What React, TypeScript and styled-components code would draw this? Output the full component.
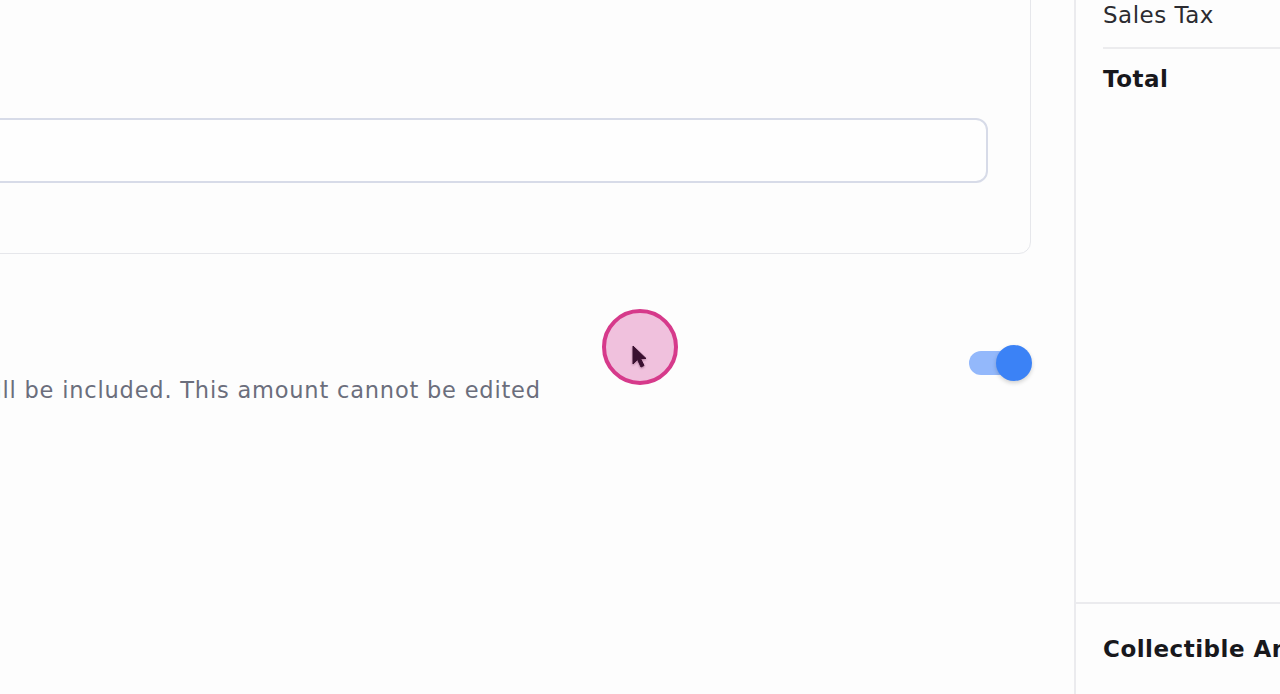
import React from 'react';
import styled, { createGlobalStyle } from 'styled-components';

const GlobalStyle = createGlobalStyle`
    html, body {
        margin: 0;
        padding: 0;
        background: #fdfdfd;
    }
    body {
        font-family: "DejaVu Sans", "Open Sans", sans-serif;
        color: #1f1f24;
    }
`;

const Page = styled.div`
    position: relative;
    display: grid;
    grid-template-columns: 1074px 1fr;
    width: 1280px;
    height: 694px;
    overflow: hidden;
    background: #fdfdfd;
`;

const MainColumn = styled.div`
    padding-right: 42px;
    display: flex;
    flex-direction: column;
`;

const Card = styled.div`
    margin-top: -120px;
    margin-left: -400px;
    margin-right: 1px;
    height: 374px;
    box-sizing: border-box;
    border: 1px solid #e6e7eb;
    border-radius: 12px;
    padding: 0 42px 70px 40px;
    display: flex;
    flex-direction: column;
    justify-content: flex-end;
`;

const Field = styled.div`
    height: 65px;
    box-sizing: border-box;
    border: 2px solid #d7dbe8;
    border-radius: 12px;
    background: #fefefe;
`;

const ToggleRow = styled.div`
    margin-top: 91px;
    margin-left: -329px;
    display: flex;
    align-items: flex-start;
    justify-content: space-between;
`;

const RowText = styled.div`
    display: flex;
    flex-direction: column;
    padding-top: 30px;
`;

const Description = styled.p`
    margin: 0;
    font-size: 22.5px;
    letter-spacing: 0.8px;
    line-height: 30px;
    color: #6b6e7c;
    white-space: nowrap;
`;

const Toggle = styled.div<{ on: boolean }>`
    position: relative;
    width: 63px;
    height: 36px;
    flex-shrink: 0;
`;

const Track = styled.div<{ on: boolean }>`
    position: absolute;
    left: 0;
    top: 6px;
    width: 52px;
    height: 24px;
    border-radius: 12px;
    background: ${({ on }) => (on ? '#93b8fb' : '#d1d5db')};
`;

const Knob = styled.div<{ on: boolean }>`
    position: absolute;
    top: 0;
    left: ${({ on }) => (on ? '27px' : '0')};
    width: 36px;
    height: 36px;
    border-radius: 50%;
    background: #3b82f6;
    box-shadow: 0 2px 4px rgba(0, 0, 0, 0.18);
`;

const Sidebar = styled.aside`
    border-left: 2px solid #ebebee;
    display: flex;
    flex-direction: column;
    justify-content: space-between;
    height: 694px;
    box-sizing: border-box;
`;

const Summary = styled.div`
    margin-top: -3px;
    padding-left: 27px;
    display: flex;
    flex-direction: column;
`;

const SummaryRow = styled.div<{ divider?: boolean }>`
    padding: ${({ divider }) => (divider ? '0 0 14px' : '12px 0 0')};
    border-bottom: ${({ divider }) => (divider ? '2px solid #ececee' : 'none')};
`;

const Label = styled.span<{ bold?: boolean }>`
    display: block;
    font-size: 23px;
    letter-spacing: 0.5px;
    line-height: 36px;
    font-weight: ${({ bold }) => (bold ? 700 : 400)};
    color: ${({ bold }) => (bold ? '#18181c' : '#2b2b30')};
    white-space: nowrap;
`;

const Footer = styled.div`
    height: 90px;
    border-top: 2px solid #ebebee;
    padding-left: 27px;
    display: flex;
    align-items: center;
    overflow: hidden;
`;

const CursorHalo = styled.div`
    position: absolute;
    left: 602px;
    top: 309px;
    width: 76px;
    height: 76px;
    box-sizing: border-box;
    border: 4px solid #d63a8b;
    border-radius: 50%;
    background: rgba(236, 176, 212, 0.78);
`;

const CursorIcon = styled.svg`
    position: absolute;
    left: 26px;
    top: 32px;
    filter: drop-shadow(0 1px 1px rgba(60, 0, 40, 0.4));
`;

export default function App() {
    const includeTax = true;

    return (
        <>
            <GlobalStyle />
            <Page>
                <MainColumn>
                    <Card>
                        <Field />
                    </Card>
                    <ToggleRow>
                        <RowText>
                            <Description>
                                Sales tax for this invoice will be included. This amount cannot be edited
                            </Description>
                        </RowText>
                        <Toggle on={includeTax}>
                            <Track on={includeTax} />
                            <Knob on={includeTax} />
                        </Toggle>
                    </ToggleRow>
                </MainColumn>
                <Sidebar>
                    <Summary>
                        <SummaryRow divider>
                            <Label>Sales Tax</Label>
                        </SummaryRow>
                        <SummaryRow>
                            <Label bold>Total</Label>
                        </SummaryRow>
                    </Summary>
                    <Footer>
                        <Label bold>Collectible Amount</Label>
                    </Footer>
                </Sidebar>
                <CursorHalo>
                    <CursorIcon width="16" height="24" viewBox="0 0 16 24">
                        <path d="M1 1 L1 19 L5.5 14.5 L9 22 L12 20.5 L8.5 13.5 L14 13.5 Z" fill="#3a1030" stroke="#3a1030" strokeWidth="1" strokeLinejoin="round" />
                    </CursorIcon>
                </CursorHalo>
            </Page>
        </>
    );
}
